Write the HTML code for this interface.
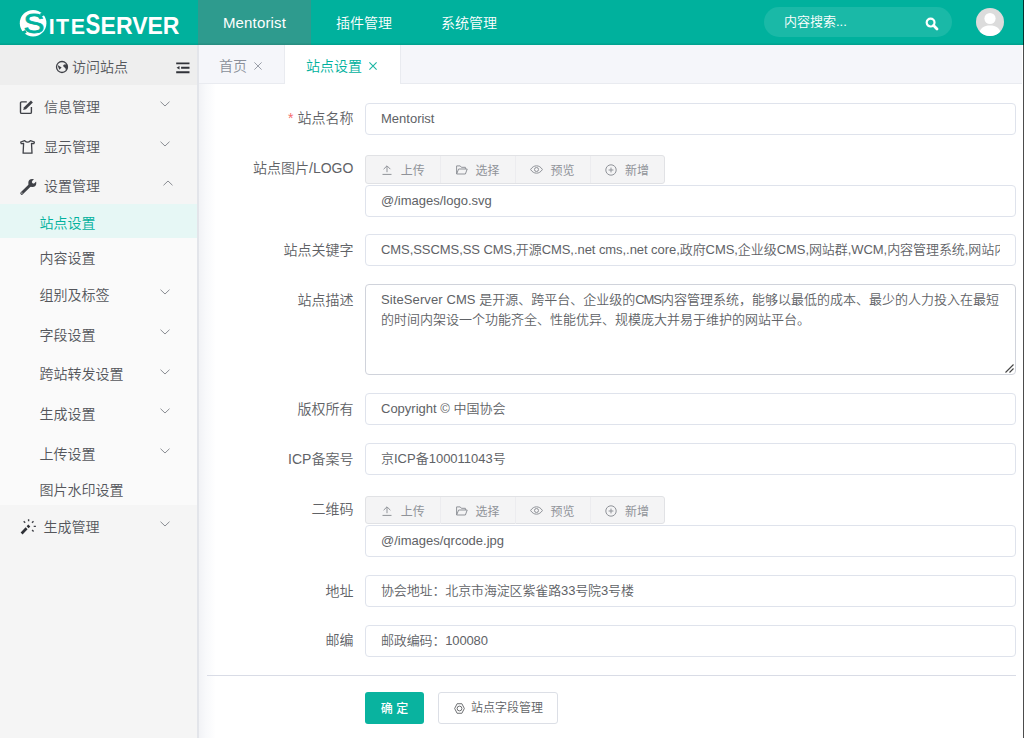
<!DOCTYPE html>
<html lang="zh-CN">
<head>
<meta charset="utf-8">
<title>SiteServer CMS</title>
<style>
*{box-sizing:border-box;margin:0;padding:0}
html,body{width:1024px;height:738px;overflow:hidden;background:#fff}
body{font-family:"Liberation Sans","Noto Sans CJK SC",sans-serif;color:#606266;position:relative;font-size:14px;font-weight:350}
svg{position:absolute;overflow:visible}
/* header */
#hdr{position:absolute;left:0;top:0;width:1024px;height:45px;background:#00b19d}
#hdr .sh{position:absolute;left:0;top:43px;width:1024px;height:2px;background:linear-gradient(rgba(0,40,30,0.04),rgba(0,40,30,0.13))}
#hdr .nav{position:absolute;top:0;height:45px;line-height:46px;color:#fff;font-size:14px;text-align:center;white-space:nowrap}
#hdr .nav.on{background:#2e9b8e}
#search{position:absolute;left:764px;top:7px;width:188px;height:30px;border-radius:15px;background:#1ab9a7;color:#fff;font-size:13px;line-height:29px;padding-left:20px}
#avatar{position:absolute;left:976px;top:8px;width:28px;height:28px;border-radius:50%;background:#dcdcdc;overflow:hidden}
/* sidebar */
#side{position:absolute;left:0;top:45px;width:198px;height:693px;background:#f5f5f5}
#side .top{position:absolute;left:0;top:0;width:197px;height:40px;background:#eeeeee}
#side .sub{position:absolute;left:0;top:159px;width:197px;height:301px;background:#fafafa}
#side .act{position:absolute;left:0;top:159px;width:197px;height:34px;background:#e6f7f5}
#side .it{position:absolute;white-space:nowrap;color:#54565b;font-size:14px;line-height:20px;height:20px}
#side .it.on{color:#00b19d}
/* tabs */
#tabs{position:absolute;left:198px;top:45px;width:824px;height:39px;background:#f5f6fa;border-bottom:1px solid #e9ebf0}
#tabs .tab{position:absolute;top:0;height:38px;line-height:42px;font-size:14px;color:#8a8f99;white-space:nowrap;border-right:1px solid #e9ebf0}
#tabs .tab.on{background:#fff;color:#00b19d;height:39px}
#tabs .x{position:absolute;top:0;font-size:17px;font-family:"Liberation Sans",sans-serif}
/* content */
#shade{position:absolute;left:199px;top:84px;width:17px;height:654px;background:linear-gradient(to right,#f2f3f6,#f8f9fb 40%,#ffffff)}
#sb{position:absolute;left:197px;top:45px;width:2px;height:693px;background:#e3e5ea}
#edge{position:absolute;left:1023px;top:0;width:1px;height:738px;background:rgba(0,0,0,0.7)}
.lbl{position:absolute;left:207.4px;width:146px;text-align:right;font-size:14px;color:#606266;white-space:nowrap;line-height:20px;height:20px}
.lbl i{color:#f56c6c;font-style:normal;margin-right:4px}
.inp{position:absolute;left:365px;width:651px;height:32px;border:1px solid #dfe3ec;border-radius:4px;background:#fff;font-size:13px;color:#606266;line-height:30px;padding:0}
.inp span{display:block;margin:0 15px 0 15px;overflow:hidden;white-space:nowrap;height:30px}
.ta{position:absolute;left:365px;top:284px;width:651px;height:91px;border:1px solid #d0d3db;border-radius:4px;background:#fff;font-size:13px;color:#606266;line-height:20px;padding:5px 12px 5px 15px}
.grp{position:absolute;left:365px;width:300px;height:29px;border:1px solid #e1e2e5;border-radius:3px;background:#f4f4f5;font-size:12px;color:#909399}
.grp b{position:absolute;top:0;width:1px;height:27px;background:#ececef}
.grp span{position:absolute;top:1.5px;line-height:26px;font-weight:normal}
.hr{position:absolute;left:207px;top:675px;width:809px;height:1px;background:#d9dce6}
.btn{position:absolute;top:692px;height:32px;border-radius:3px;font-size:12px;line-height:30px;white-space:nowrap}
</style>
</head>
<body>
<div id="hdr">
<svg width="198" height="45" viewBox="0 0 198 45" style="left:0;top:0">
  <circle cx="33.1" cy="23.2" r="13.3" fill="#fff"/>
  <g fill="#00b19d" stroke="#00b19d" font-family="'Liberation Sans',sans-serif">
    <text transform="translate(23.4,33.4) scale(1.1,1)" font-size="28.5" stroke-width="0.8">S</text>
    <path d="M40.5 15.2 L46 12.6 M26 31.4 L20.4 34" stroke-width="3.2" fill="none"/>
  </g>
  <g fill="#fff" font-family="'Liberation Sans',sans-serif" font-weight="bold">
    <text transform="translate(48.7,33.5) scale(0.93,1)" font-size="23" style="letter-spacing:1.6px">ITE</text>
    <text transform="translate(85.6,33.5) scale(0.74,1)" font-size="30">S</text>
    <text x="100.6" y="33.5" font-size="23">ERVER</text>
  </g>
</svg>
<div class="nav on" style="left:198px;width:113px;font-size:15px;letter-spacing:0.15px">Mentorist</div>
<div class="nav" style="left:311px;width:106px">插件管理</div>
<div class="nav" style="left:417px;width:104px">系统管理</div>
<div id="search">内容搜索...</div>
<div class="sh"></div>
<svg width="14" height="14" viewBox="0 0 14 14" style="left:925.2px;top:16.8px"><circle cx="5.6" cy="5.6" r="3.9" fill="none" stroke="#fff" stroke-width="2.2"/><path d="M8.6 8.6 L12 12" stroke="#fff" stroke-width="2.8" stroke-linecap="round"/></svg>
<div id="avatar"><svg width="28" height="28" viewBox="0 0 28 28" style="left:0;top:0"><circle cx="14" cy="10.5" r="5.6" fill="#fff"/><path d="M3 28 C3 20 8 17.5 14 17.5 C20 17.5 25 20 25 28 Z" fill="#fff"/></svg></div>
</div>
<div id="side"><div class="top"></div><div class="sub"></div><div class="act"></div>
<div class="it" style="left:72px;top:11.5px">访问站点</div>
<div class="it" style="left:44px;top:51.95px">信息管理</div>
<svg width="10" height="6" viewBox="0 0 10 6" style="left:159.5px;top:56.10px"><path d="M0.5 0.7 L5 5 L9.5 0.7" fill="none" stroke="#8a8d93" stroke-width="1"/></svg>
<div class="it" style="left:44px;top:91.65px">显示管理</div>
<svg width="10" height="6" viewBox="0 0 10 6" style="left:159.5px;top:95.80px"><path d="M0.5 0.7 L5 5 L9.5 0.7" fill="none" stroke="#8a8d93" stroke-width="1"/></svg>
<div class="it" style="left:44px;top:131.15px">设置管理</div>
<svg width="10" height="6" viewBox="0 0 10 6" style="left:162.5px;top:135.30px"><path d="M0.5 5.3 L5 1 L9.5 5.3" fill="none" stroke="#8a8d93" stroke-width="1"/></svg>
<div class="it on" style="left:39.5px;top:168.25px">站点设置</div>
<div class="it" style="left:39.5px;top:202.75px">内容设置</div>
<div class="it" style="left:39.5px;top:240.05px">组别及标签</div>
<svg width="10" height="6" viewBox="0 0 10 6" style="left:159.5px;top:244.20px"><path d="M0.5 0.7 L5 5 L9.5 0.7" fill="none" stroke="#8a8d93" stroke-width="1"/></svg>
<div class="it" style="left:39.5px;top:279.55px">字段设置</div>
<svg width="10" height="6" viewBox="0 0 10 6" style="left:159.5px;top:283.70px"><path d="M0.5 0.7 L5 5 L9.5 0.7" fill="none" stroke="#8a8d93" stroke-width="1"/></svg>
<div class="it" style="left:39.5px;top:319.35px">跨站转发设置</div>
<svg width="10" height="6" viewBox="0 0 10 6" style="left:159.5px;top:323.50px"><path d="M0.5 0.7 L5 5 L9.5 0.7" fill="none" stroke="#8a8d93" stroke-width="1"/></svg>
<div class="it" style="left:39.5px;top:359.05px">生成设置</div>
<svg width="10" height="6" viewBox="0 0 10 6" style="left:159.5px;top:363.20px"><path d="M0.5 0.7 L5 5 L9.5 0.7" fill="none" stroke="#8a8d93" stroke-width="1"/></svg>
<div class="it" style="left:39.5px;top:398.75px">上传设置</div>
<svg width="10" height="6" viewBox="0 0 10 6" style="left:159.5px;top:402.90px"><path d="M0.5 0.7 L5 5 L9.5 0.7" fill="none" stroke="#8a8d93" stroke-width="1"/></svg>
<div class="it" style="left:39.5px;top:435.15px">图片水印设置</div>
<div class="it" style="left:43.5px;top:472.25px">生成管理</div>
<svg width="10" height="6" viewBox="0 0 10 6" style="left:159.5px;top:476.40px"><path d="M0.5 0.7 L5 5 L9.5 0.7" fill="none" stroke="#8a8d93" stroke-width="1"/></svg>
<svg width="14" height="14" viewBox="0 0 14 14" style="left:54.8px;top:15px"><circle cx="7" cy="7" r="5.5" fill="none" stroke="#3f4147" stroke-width="1.3"/><path d="M2.6 5 L6.6 7.4 L4.4 9.8 L3.6 8 Z" fill="#3f4147"/><path d="M8.4 5 C9.6 4.2 10.8 4.6 12 4 C12.8 6 12.6 9 11 10.6 C10.6 8.6 10.4 7.6 9.2 7.2 C8.4 6.8 8 5.8 8.4 5 Z" fill="#3f4147"/></svg>
<svg width="14" height="12" viewBox="0 0 14 12" style="left:176px;top:17px"><path d="M0.2 1.4 H13.5 M5.1 5.8 H13.5 M0.2 10.3 H13.5" stroke="#303238" stroke-width="1.9" fill="none"/><path d="M0.6 5.8 L3.5 4.1 V7.5 Z" fill="#303238"/></svg>
<svg width="16" height="16" viewBox="0 0 16 16" style="left:19px;top:54px"><path d="M7.8 2.9 H2.7 Q1.5 2.9 1.5 4.1 V13.2 Q1.5 14.4 2.7 14.4 H11.2 Q12.4 14.4 12.4 13.2 V7.9" fill="none" stroke="#3f4147" stroke-width="1.4"/><path d="M4.15 11 L5.05 8.19 L11.93 1.59 L13.87 3.61 L6.99 10.21 Z" fill="#3f4147"/></svg>
<svg width="17" height="16" viewBox="0 0 17 16" style="left:19px;top:94px"><path d="M5.7 1.7 Q8.55 4.5 11.4 1.7 L15.4 3 L14.8 4.7 L12.5 4.4 L13 14.2 H4.1 L4.6 4.4 L2.3 4.7 L1.7 3 Z" fill="none" stroke="#3f4147" stroke-width="1.3" stroke-linejoin="round"/></svg>
<svg width="18" height="18" viewBox="0 0 18 18" style="left:19.5px;top:133.5px"><path d="M1.8 14.3 L10.5 5.7" stroke="#3f4147" stroke-width="3" stroke-linecap="round" fill="none"/><circle cx="12.3" cy="4.1" r="4" fill="#3f4147"/><path d="M13.5 2.9 L18 -1.6" stroke="#f5f5f5" stroke-width="3.2" stroke-linecap="round" fill="none"/><circle cx="1.9" cy="14.1" r="0.65" fill="#f5f5f5"/></svg>
<svg width="17" height="16" viewBox="0 0 17 16" style="left:19.5px;top:474px"><path d="M1.6 14.5 L6.6 9.3 M7.6 8.3 L9.3 6.5" stroke="#2f3136" stroke-width="2.7" fill="none"/><path d="M8.6 0.3 V2.3 M3.7 2.2 L5.2 3.7 M13.5 2.2 L12 3.7 M13.7 7.4 H15.9 M12.1 10.9 L13.6 12.4" stroke="#3f4147" stroke-width="1.4" fill="none"/></svg>
</div>
<div id="tabs">
<div class="tab" style="left:0;width:87px;padding-left:21px">首页<svg width="8" height="8" viewBox="0 0 8 8" style="left:56.3px;top:16.5px"><path d="M0.4 0.4 L7.6 7.6 M7.6 0.4 L0.4 7.6" stroke="#9a9ea8" stroke-width="1" fill="none"/></svg></div>
<div class="tab on" style="left:87px;width:116px;padding-left:21px">站点设置<svg width="8" height="8" viewBox="0 0 8 8" style="left:84px;top:16.5px"><path d="M0.4 0.4 L7.6 7.6 M7.6 0.4 L0.4 7.6" stroke="#1ab5a3" stroke-width="1.1" fill="none"/></svg></div>
</div>
<div id="shade"></div><div id="sb"></div>
<div class="lbl" style="top:107.9px"><i>*</i>站点名称</div>
<div class="inp" style="top:103px"><span>Mentorist</span></div>
<div class="lbl" style="top:158.1px">站点图片/LOGO</div>
<div class="grp" style="top:155px;height:29px"><b style="left:74px"></b><b style="left:149px"></b><b style="left:224px"></b><svg width="10" height="10" viewBox="0 0 10 10" style="left:16.1px;top:8.6px"><path d="M5 7.2 V1 M1.6 4.2 L5 0.8 L8.4 4.2 M0.5 9.4 H9.5" fill="none" stroke="#909399" stroke-width="1"/></svg><span style="left:34.8px">上传</span><svg width="12" height="10" viewBox="0 0 12 10" style="left:89.6px;top:8.6px"><path d="M0.6 9 V0.9 H4.2 L5.4 2.3 H9.4 V4 M0.6 9 L2.6 4 H11.2 L9.4 9 Z" fill="none" stroke="#909399" stroke-width="1" stroke-linejoin="round"/></svg><span style="left:109.4px">选择</span><svg width="13" height="9" viewBox="0 0 13 9" style="left:163.7px;top:8.9px"><path d="M0.6 4.5 C3.5 -0.4 9.5 -0.4 12.4 4.5 C9.5 9.4 3.5 9.4 0.6 4.5 Z" fill="none" stroke="#909399" stroke-width="1"/><circle cx="6.5" cy="4.5" r="2" fill="none" stroke="#909399" stroke-width="1"/></svg><span style="left:184.4px">预览</span><svg width="12" height="12" viewBox="0 0 12 12" style="left:238.6px;top:7.6px"><circle cx="6" cy="6" r="5.2" fill="none" stroke="#909399" stroke-width="1"/><path d="M3.6 6 H8.4 M6 3.6 V8.4" stroke="#909399" stroke-width="1" fill="none"/></svg><span style="left:258.9px">新增</span></div>
<div class="inp" style="top:185px"><span>@/images/logo.svg</span></div>
<div class="lbl" style="top:239.5px">站点关键字</div>
<div class="inp" style="top:234px"><span style="letter-spacing:-0.06px">CMS,SSCMS,SS CMS,开源CMS,.net cms,.net core,政府CMS,企业级CMS,网站群,WCM,内容管理系统,网站内容管理</span></div>
<div class="lbl" style="top:289.9px">站点描述</div>
<div class="ta"><span style="letter-spacing:0.1px">SiteServer CMS </span>是开源、跨平台、企业级的<span style="letter-spacing:-1.1px">CMS</span>内容管理系统，能够以最低的成本、最少的人力投入在最短的时间内架设一个功能齐全、性能优异、规模庞大并易于维护的网站平台。<svg width="9" height="9" viewBox="0 0 9 9" style="left:639px;top:79px"><path d="M0.5 8.5 L8.5 0.5 M4.5 8.5 L8.5 4.5" stroke="#444" stroke-width="1.1" fill="none"/></svg></div>
<div class="lbl" style="top:398.6px">版权所有</div>
<div class="inp" style="top:393px"><span>Copyright © 中国协会</span></div>
<div class="lbl" style="top:448.5px">ICP备案号</div>
<div class="inp" style="top:443px"><span>京ICP备100011043号</span></div>
<div class="lbl" style="top:498.8px">二维码</div>
<div class="grp" style="top:496px;height:28px"><b style="left:74px"></b><b style="left:149px"></b><b style="left:224px"></b><svg width="10" height="10" viewBox="0 0 10 10" style="left:16.1px;top:8.6px"><path d="M5 7.2 V1 M1.6 4.2 L5 0.8 L8.4 4.2 M0.5 9.4 H9.5" fill="none" stroke="#909399" stroke-width="1"/></svg><span style="left:34.8px">上传</span><svg width="12" height="10" viewBox="0 0 12 10" style="left:89.6px;top:8.6px"><path d="M0.6 9 V0.9 H4.2 L5.4 2.3 H9.4 V4 M0.6 9 L2.6 4 H11.2 L9.4 9 Z" fill="none" stroke="#909399" stroke-width="1" stroke-linejoin="round"/></svg><span style="left:109.4px">选择</span><svg width="13" height="9" viewBox="0 0 13 9" style="left:163.7px;top:8.9px"><path d="M0.6 4.5 C3.5 -0.4 9.5 -0.4 12.4 4.5 C9.5 9.4 3.5 9.4 0.6 4.5 Z" fill="none" stroke="#909399" stroke-width="1"/><circle cx="6.5" cy="4.5" r="2" fill="none" stroke="#909399" stroke-width="1"/></svg><span style="left:184.4px">预览</span><svg width="12" height="12" viewBox="0 0 12 12" style="left:238.6px;top:7.6px"><circle cx="6" cy="6" r="5.2" fill="none" stroke="#909399" stroke-width="1"/><path d="M3.6 6 H8.4 M6 3.6 V8.4" stroke="#909399" stroke-width="1" fill="none"/></svg><span style="left:258.9px">新增</span></div>
<div class="inp" style="top:525px"><span>@/images/qrcode.jpg</span></div>
<div class="lbl" style="top:580.8px">地址</div>
<div class="inp" style="top:575px"><span style="letter-spacing:-0.14px">协会地址：北京市海淀区紫雀路33号院3号楼</span></div>
<div class="lbl" style="top:629.8px">邮编</div>
<div class="inp" style="top:625px"><span style="letter-spacing:-0.15px">邮政编码：100080</span></div>
<div class="hr"></div>
<div class="btn" style="left:365px;width:59px;background:#09b39f;color:#fff;text-align:center;line-height:34px;font-weight:500">确 定</div>
<div class="btn" style="left:438px;width:120px;border:1px solid #dcdfe6;background:#fff;color:#606266"><svg width="11" height="11" viewBox="0 0 12 12" style="left:14.5px;top:9.5px"><path d="M3.4 0.8 H8.6 L11.3 6 L8.6 11.2 H3.4 L0.7 6 Z" fill="none" stroke="#606266" stroke-width="1" stroke-linejoin="round"/><circle cx="6" cy="6" r="2.6" fill="none" stroke="#606266" stroke-width="1"/></svg><span style="position:absolute;left:32px;top:0">站点字段管理</span></div>
<div id="edge"></div>
</body>
</html>
